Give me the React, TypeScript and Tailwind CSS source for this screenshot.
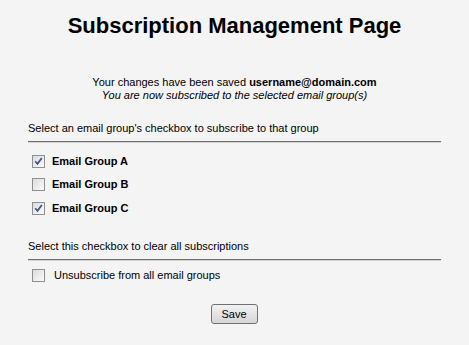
import React from "react";

function Box({ checked }: { checked: boolean }) {
  return (
    <span className="inline-flex h-[13px] w-[13px] shrink-0 items-center justify-center border border-[#8e8f8f] bg-gradient-to-br from-[#dcdcdc] to-[#fbfbfb]">
      {checked && (
        <svg width="9" height="9" viewBox="0 0 9 9">
          <path d="M1.2 4.2 L3.5 6.8 L7.8 1" fill="none" stroke="#3c5396" strokeWidth="1.7" />
        </svg>
      )}
    </span>
  );
}

export default function App() {
  const groups = [
    { name: "Email Group A", checked: true, mt: "mt-[12px]" },
    { name: "Email Group B", checked: false, mt: "mt-[10px]" },
    { name: "Email Group C", checked: true, mt: "mt-[11px]" },
  ];
  return (
    <div
      className="h-[345px] w-[469px] overflow-hidden bg-[#f4f4f4] text-black"
      style={{ fontFamily: '"Liberation Sans", Arial, sans-serif' }}
    >
      <h1 className="pt-[13px] text-center text-[22px] font-bold leading-[26px]">Subscription Management Page</h1>
      <div className="mt-[37px] text-center text-[11px] leading-[13px]">
        <div>
          Your changes have been saved <span className="font-bold">username@domain.com</span>
        </div>
        <div className="italic">You are now subscribed to the selected email group(s)</div>
      </div>
      <div className="mx-[28px] mt-[20px]">
        <div className="text-[11px] leading-[13px]">Select an email group's checkbox to subscribe to that group</div>
        <div className="mt-[6px] h-[2px] border-t border-[#6f6f6f] bg-[#d4d4d4]" />
        {groups.map((g) => (
          <div key={g.name} className={`${g.mt} flex h-[13px] items-center gap-[7px] pl-[4px]`}>
            <Box checked={g.checked} />
            <span className="text-[11px] font-bold leading-[13px]">{g.name}</span>
          </div>
        ))}
        <div className="mt-[25px] text-[11px] leading-[13px]">Select this checkbox to clear all subscriptions</div>
        <div className="mt-[6px] h-[2px] border-t border-[#6f6f6f] bg-[#d4d4d4]" />
        <div className="mt-[8px] flex h-[13px] items-center gap-[9px] pl-[4px]">
          <Box checked={false} />
          <span className="text-[11px] leading-[13px]">Unsubscribe from all email groups</span>
        </div>
        <div className="mt-[22px] flex justify-center">
          <button className="ml-[-1px] h-[20px] w-[47px] rounded-[3px] border border-[#707070] bg-gradient-to-b from-[#f2f2f2] to-[#d6d6d6] text-[11px] leading-[13px]">
            Save
          </button>
        </div>
      </div>
    </div>
  );
}
